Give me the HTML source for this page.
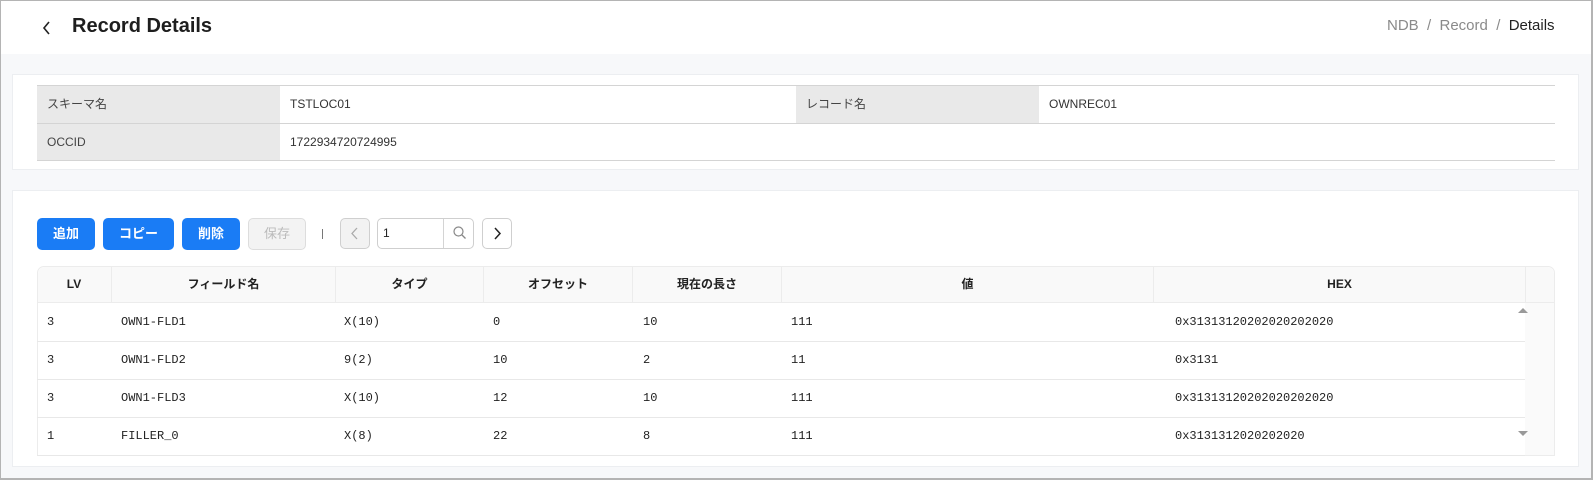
<!DOCTYPE html>
<html><head><meta charset="utf-8"><style>
*{box-sizing:border-box;margin:0;padding:0}
body{width:1593px;height:480px;overflow:hidden;background:#f7f8fa;font-family:"Liberation Sans","Noto Sans CJK JP",sans-serif;color:#333;position:relative}
.frame{position:absolute;left:0;top:0;width:1593px;height:480px;border:1px solid #b4b4b4;border-right-width:2px;border-bottom-width:2px}
.hdr{position:absolute;left:1px;top:1px;width:1590px;height:53px;background:#fff}
.abs{position:absolute}
.panel{position:absolute;background:#fff;border:1px solid #eceef1}
.kv{position:absolute;font-size:12px;line-height:36px;padding-left:10px}
.lbl{background:#e9e9e9;color:#444}
.btn{position:absolute;top:218px;height:32px;border-radius:5px;background:#1a7cf5;color:#fff;font-size:13px;font-weight:bold;text-align:center;line-height:32px}
.nb{position:absolute;top:218px;height:31px;border:1px solid #cfcfcf;border-radius:5px;background:#fff}
.th{position:absolute;top:266px;height:37px;line-height:37px;font-size:12px;font-weight:bold;text-align:center;border-left:1px solid #ececec;color:#222}
.td{position:absolute;height:38px;line-height:38px;font-family:"Liberation Mono","DejaVu Sans Mono",monospace;font-size:12px;color:#222}
.hl{position:absolute;left:37px;width:1488px;height:1px;background:#e8e8e8}
</style></head><body>
<div class="hdr"></div>
<svg class="abs" style="left:42px;top:21px" width="10" height="14"><path d="M7 1 L2 7 L7 13" stroke="#222" stroke-width="1.6" fill="none"/></svg>
<div class="abs" style="left:72px;top:15px;font-size:20px;font-weight:bold;color:#1e1e1e">Record Details</div>
<div class="abs" style="left:1387px;top:17px;font-size:15px;color:#8a8a8a;white-space:nowrap">NDB &nbsp;/&nbsp; Record &nbsp;/&nbsp; <span style="color:#222">Details</span></div>

<div class="panel" style="left:12px;top:74px;width:1567px;height:96px"></div>
<div class="abs" style="left:37px;top:85px;width:1518px;height:1px;background:#d4d4d4"></div>
<div class="kv lbl" style="left:37px;top:86px;width:243px;height:37px">スキーマ名</div>
<div class="kv" style="left:280px;top:86px">TSTLOC01</div>
<div class="kv lbl" style="left:796px;top:86px;width:243px;height:37px">レコード名</div>
<div class="kv" style="left:1039px;top:86px">OWNREC01</div>
<div class="abs" style="left:37px;top:123px;width:1518px;height:1px;background:#d4d4d4"></div>
<div class="kv lbl" style="left:37px;top:124px;width:243px;height:36px">OCCID</div>
<div class="kv" style="left:280px;top:124px">1722934720724995</div>
<div class="abs" style="left:37px;top:160px;width:1518px;height:1px;background:#d4d4d4"></div>

<div class="panel" style="left:12px;top:190px;width:1567px;height:277px"></div>
<div class="btn" style="left:37px;width:58px">追加</div>
<div class="btn" style="left:103px;width:71px">コピー</div>
<div class="btn" style="left:182px;width:58px">削除</div>
<div class="btn" style="left:248px;width:58px;background:#f3f3f3;border:1px solid #ddd;color:#bbb;font-weight:normal;line-height:30px">保存</div>
<div class="abs" style="left:322px;top:229px;width:1px;height:10px;background:#777"></div>
<div class="nb" style="left:340px;width:30px;background:#f2f2f2"><svg width="28" height="29"><path d="M16 9 L11 14.5 L16 20" stroke="#aaa" stroke-width="1.3" fill="none"/></svg></div>
<div class="nb" style="left:377px;width:97px"><span class="abs" style="left:5px;top:7px;font-size:12px;color:#222">1</span><div class="abs" style="left:65px;top:0;width:1px;height:29px;background:#d4d4d4"></div><svg class="abs" style="left:68px;top:0" width="28" height="29"><circle cx="12.5" cy="12.5" r="4.5" stroke="#888" stroke-width="1.2" fill="none"/><path d="M16 16 L19.5 19.5" stroke="#888" stroke-width="1.3"/></svg></div>
<div class="nb" style="left:482px;width:30px"><svg width="28" height="29"><path d="M12 9 L17 14.5 L12 20" stroke="#222" stroke-width="1.5" fill="none"/></svg></div>

<div class="abs" style="left:37px;top:266px;width:1518px;height:190px;border:1px solid #ececec;border-radius:7px 7px 0 0;background:#fff"></div>
<div class="abs" style="left:38px;top:267px;width:1516px;height:36px;background:#f9f9f9;border-radius:7px 7px 0 0;border-bottom:1px solid #ececec"></div>
<div class="th" style="left:37px;width:74px;border-left:none">LV</div>
<div class="th" style="left:111px;width:224px">フィールド名</div>
<div class="th" style="left:335px;width:148px">タイプ</div>
<div class="th" style="left:483px;width:149px">オフセット</div>
<div class="th" style="left:632px;width:149px">現在の長さ</div>
<div class="th" style="left:781px;width:372px">値</div>
<div class="th" style="left:1153px;width:372px">HEX</div>
<div class="th" style="left:1525px;width:29px"></div>
<div class="abs" style="left:1525px;top:303px;width:29px;height:152px;background:#fafafa"></div>
<svg class="abs" style="left:1517px;top:306px" width="12" height="8"><path d="M1 7 L6 2 L11 7Z" fill="#999"/></svg>
<svg class="abs" style="left:1517px;top:430px" width="12" height="8"><path d="M1 1 L6 6 L11 1Z" fill="#999"/></svg>
<div class="hl" style="top:341px"></div><div class="hl" style="top:379px"></div><div class="hl" style="top:417px"></div><div class="hl" style="top:455px"></div>

<div class="td" style="left:47px;top:303px">3</div><div class="td" style="left:121px;top:303px">OWN1-FLD1</div><div class="td" style="left:344px;top:303px">X(10)</div><div class="td" style="left:493px;top:303px">0</div><div class="td" style="left:643px;top:303px">10</div><div class="td" style="left:791px;top:303px">111</div><div class="td" style="left:1175px;top:303px">0x31313120202020202020</div>
<div class="td" style="left:47px;top:341px">3</div><div class="td" style="left:121px;top:341px">OWN1-FLD2</div><div class="td" style="left:344px;top:341px">9(2)</div><div class="td" style="left:493px;top:341px">10</div><div class="td" style="left:643px;top:341px">2</div><div class="td" style="left:791px;top:341px">11</div><div class="td" style="left:1175px;top:341px">0x3131</div>
<div class="td" style="left:47px;top:379px">3</div><div class="td" style="left:121px;top:379px">OWN1-FLD3</div><div class="td" style="left:344px;top:379px">X(10)</div><div class="td" style="left:493px;top:379px">12</div><div class="td" style="left:643px;top:379px">10</div><div class="td" style="left:791px;top:379px">111</div><div class="td" style="left:1175px;top:379px">0x31313120202020202020</div>
<div class="td" style="left:47px;top:417px">1</div><div class="td" style="left:121px;top:417px">FILLER_0</div><div class="td" style="left:344px;top:417px">X(8)</div><div class="td" style="left:493px;top:417px">22</div><div class="td" style="left:643px;top:417px">8</div><div class="td" style="left:791px;top:417px">111</div><div class="td" style="left:1175px;top:417px">0x3131312020202020</div>
<div class="frame"></div>
</body></html>
